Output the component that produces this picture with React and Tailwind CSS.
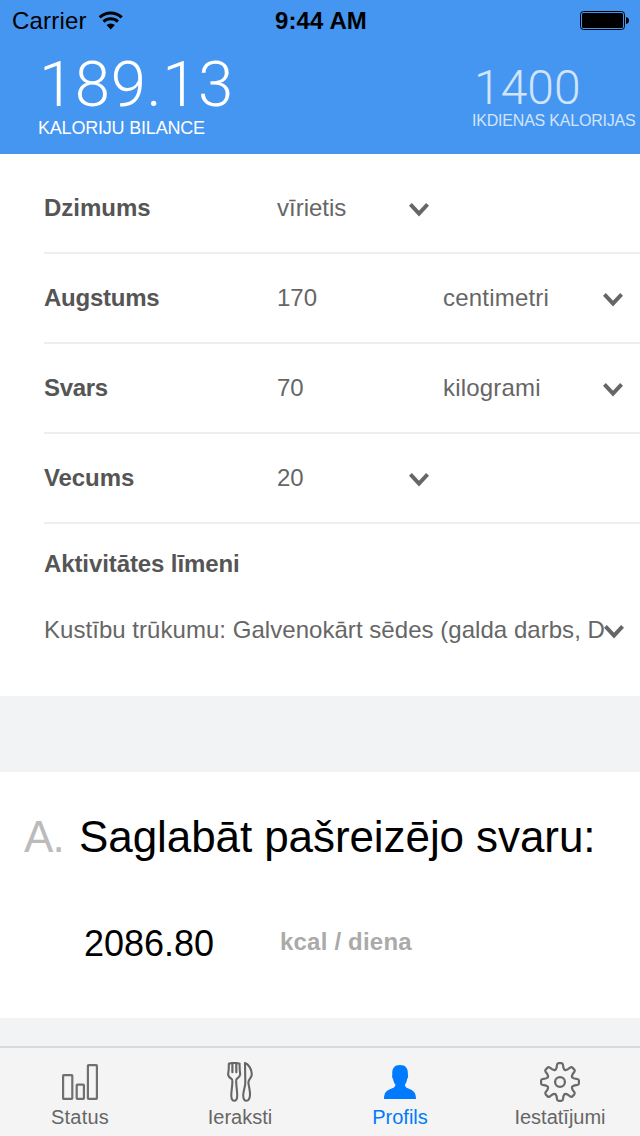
import React from "react";

function Chevron({ className = "" }) {
  return (
    <svg className={`block h-4 w-5 shrink-0 ${className}`} viewBox="0 0 20 16" fill="none" stroke="#666" strokeWidth="4">
      <path d="M1.4 2.4 L10 11.6 L18.6 2.4" />
    </svg>
  );
}

function WifiIcon() {
  return (
    <svg className="block h-[19px] w-[26px]" viewBox="0 0 26 19" fill="none" stroke="#000">
      <path d="M1.7 6.3 A16.2 16.2 0 0 1 23.7 6.3" strokeWidth="3.2" />
      <path d="M5.5 10.6 A10.6 10.6 0 0 1 19.9 10.6" strokeWidth="3" />
      <path d="M8.5 14 A6.3 6.3 0 0 1 16.9 14 L12.7 18.4 Z" fill="#000" stroke="none" />
    </svg>
  );
}

function BatteryIcon() {
  return (
    <svg className="block h-5 w-[50px]" viewBox="0 0 50 20">
      <rect x="0.5" y="0.5" width="44" height="18" rx="3" fill="none" stroke="#000" />
      <rect x="2" y="2" width="41" height="15" rx="1.5" fill="#000" />
      <path d="M46 6 Q49 6.5 49 9.5 Q49 12.5 46 13 Z" fill="#000" />
    </svg>
  );
}

function StatusIcon() {
  return (
    <svg className="block size-10" viewBox="0 0 40 40" fill="none" stroke="#707070" strokeWidth="2.2">
      <rect x="3.1" y="13.2" width="9.2" height="23.7" rx="0.6" />
      <rect x="16.7" y="22.7" width="7.2" height="14.2" rx="0.6" />
      <rect x="27.9" y="3.1" width="9" height="33.8" rx="0.6" />
    </svg>
  );
}

function CutleryIcon() {
  return (
    <svg className="block size-10" viewBox="0 0 40 40" fill="none" stroke="#666" strokeWidth="2.1" strokeLinejoin="round">
      <path d="M8.8 1.8 Q11 .9 14.2 1 Q17.4 .9 19.6 1.8 Q19.5 7.5 20.2 12.4 Q19.8 15.3 17 16.7 Q16 17.4 16.2 20 C16.4 26 17.3 29 17.2 34 Q17 38.8 14.3 38.8 Q11.5 38.8 11.3 34 C11.2 29 12.2 26 12.4 20 Q12.5 17.4 11.4 16.7 Q8.5 15.3 8.1 12.4 Q9 7.5 8.8 1.8 Z" />
      <path d="M12.4 1.5 V10.2 M16.3 1.5 V10.2" strokeWidth="2.2" strokeLinecap="round" />
      <path d="M25 1 C28.4 1.8 31.8 7.5 31.8 12.2 C31.8 15.8 28.4 17.4 28.4 20.3 C28.4 24 30.3 28 30 33 Q29.6 38.8 26.4 38.8 Q23.4 38.8 23.2 33.5 C23.2 28.5 25.4 24.5 25.3 20.5 Z" />
    </svg>
  );
}

function PersonIcon() {
  return (
    <svg className="block size-10" viewBox="0 0 40 40" fill="#007aff">
      <path d="M20 3 C25.6 3 28.2 6.2 27.9 12.5 C28.4 14.2 28 16.2 27 17.4 C26.7 19.8 25.8 21.4 25 22.4 C24.9 24.3 25.6 25.3 28.3 26.4 C33.5 28.4 36 30.4 36 37 H4 C4 30.4 6.5 28.4 11.7 26.4 C14.6 25.3 15.5 24.3 15.4 22.4 C14.4 21.4 13.5 19.8 13.2 17.4 C12.2 16.2 11.8 14.2 12.3 12.5 C11.9 6.2 14.4 3 20 3 Z" />
    </svg>
  );
}

function GearIcon() {
  const tooth = "M-5 -12.1 C-3.3 -12.7 -3.3 -14.4 -3 -17.2 Q-2.8 -18.9 -1.4 -18.9 H1.4 Q2.8 -18.9 3 -17.2 C3.3 -14.4 3.3 -12.7 5 -12.1";
  return (
    <svg className="block size-10" viewBox="-20 -20 40 40" fill="none" stroke="#6a6a6a" strokeWidth="2.2" strokeLinejoin="round" strokeLinecap="round">
      {[0, 45, 90, 135, 180, 225, 270, 315].map((angle) => (
        <path key={angle} d={tooth} transform={`rotate(${angle})`} />
      ))}
      <circle r="4.9" strokeWidth="2.3" />
    </svg>
  );
}

function Row({ label, value, unit, select, spacing = "tracking-normal" }) {
  return (
    <div className="ml-11 flex h-[90px] items-center border-b-2 border-[#eeeeee]">
      <div className={`w-[233px] text-[24px] font-bold text-[#555] ${spacing}`}>{label}</div>
      <div className={select ? "w-[132px]" : "w-[166px]"}>{value}</div>
      {select && <Chevron className="mt-[3px]" />}
      {unit && <div className="w-[160px] tracking-[0.2px]">{unit}</div>}
      {unit && <Chevron className="mt-[3px]" />}
    </div>
  );
}

function Tab({ icon, label, active, spacing = "" }) {
  return (
    <div className={`flex flex-1 flex-col items-center pt-[14px] ${active ? "text-[#007aff]" : "text-[#666]"}`}>
      {icon}
      <span className={`mt-[3px] text-[20px] leading-6 ${spacing}`}>{label}</span>
    </div>
  );
}

export default function App() {
  return (
    <div className="flex h-[1136px] w-[640px] flex-col overflow-hidden bg-[#f2f3f5] font-['Liberation_Sans',Arial,sans-serif] text-[24px] leading-7 text-[#666]">
      <header className="h-[154px] shrink-0 bg-[#4596f1]">
        <div className="grid h-10 grid-cols-3 items-center pl-3 pr-[10px] text-black">
          <div className="flex items-center gap-[11px]">
            <span className="mt-[1px] tracking-[0.2px]">Carrier</span>
            <WifiIcon />
          </div>
          <div className="mt-[1px] text-center font-bold tracking-[0.1px]">9:44 AM</div>
          <div className="mt-[2px] flex justify-end">
            <BatteryIcon />
          </div>
        </div>
        <div className="flex justify-between pl-[38px] text-white">
          <div className="pt-[13px]">
            <div className="pl-[1px] font-['Roboto',sans-serif] text-[63.5px] leading-[64px] font-light tracking-[0.6px]">189.13</div>
            <div className="text-[18px] leading-[22px] tracking-[-0.2px]">KALORIJU BILANCE</div>
          </div>
          <div className="w-[168px] pt-[24px] opacity-75">
            <div className="pl-[2px] font-['Roboto',sans-serif] text-[48px] leading-[48px] font-light">1400</div>
            <div className="-mt-px text-[16px] leading-5 tracking-[-0.2px] whitespace-nowrap">IKDIENAS KALORIJAS</div>
          </div>
        </div>
      </header>

      <section className="h-[542px] shrink-0 bg-white pt-[10px]">
        <Row label="Dzimums" value="vīrietis" select />
        <Row label="Augstums" value="170" unit="centimetri" spacing="tracking-[-0.25px]" />
        <Row label="Svars" value="70" unit="kilogrami" spacing="tracking-[-0.3px]" />
        <Row label="Vecums" value="20" select spacing="tracking-[-0.1px]" />
        <div className="ml-11 pt-[26px]">
          <div className="font-bold tracking-[-0.1px] text-[#555]">Aktivitātes līmeni</div>
          <div className="flex items-center pt-[38px]">
            <span className="w-[560px] tracking-[0.04px] whitespace-nowrap">Kustību trūkumu: Galvenokārt sēdes (galda darbs, D</span>
            <Chevron className="mt-[3px]" />
          </div>
        </div>
      </section>

      <section className="mt-[76px] h-[246px] shrink-0 bg-white">
        <div className="flex pt-[40px] text-[44px] leading-[50px] whitespace-nowrap">
          <span className="w-[54px] pl-6 tracking-[-0.9px] text-[#bbb]">A.</span>
          <h1 className="ml-[25px] tracking-[-0.08px] text-black">Saglabāt pašreizējo svaru:</h1>
        </div>
        <div className="flex items-center pt-[60px] pl-[84px]">
          <span className="w-[196px] text-[36px] leading-[44px] text-black">2086.80</span>
          <span className="-mt-1 font-bold tracking-[0.2px] text-[#aaa]">kcal / diena</span>
        </div>
      </section>

      <nav className="mt-auto flex h-[90px] shrink-0 border-t-2 border-[#d9dadb] bg-[#f4f4f4]">
        <Tab icon={<StatusIcon />} label="Status" spacing="tracking-[0.2px]" />
        <Tab icon={<CutleryIcon />} label="Ieraksti" />
        <Tab icon={<PersonIcon />} label="Profils" active />
        <Tab icon={<GearIcon />} label="Iestatījumi" />
      </nav>
    </div>
  );
}
